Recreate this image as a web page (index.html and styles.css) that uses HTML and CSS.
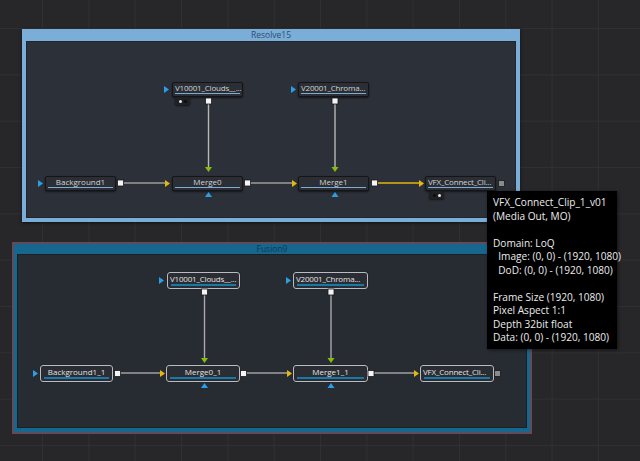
FILE: index.html
```html
<!DOCTYPE html>
<html>
<head>
<meta charset="utf-8">
<link rel="stylesheet" href="styles.css">
</head>
<body>
<div class="canvas">
  <div class="group g1">
    <div class="group-head">Resolve15</div>
    <div class="group-body"></div>
  </div>
  <div class="group g2">
    <div class="group-head">Fusion9</div>
    <div class="group-body"></div>
  </div>

  <div class="node n1 left" style="left:172px;top:82px;width:71px">V10001_Clouds__...</div>
  <div class="node n1 left" style="left:298px;top:82px;width:71px">V20001_Chroma...</div>
  <div class="node n1" style="left:45px;top:176px;width:71px">Background1</div>
  <div class="node n1" style="left:172px;top:176px;width:71px">Merge0</div>
  <div class="node n1" style="left:298px;top:176px;width:71px">Merge1</div>
  <div class="node n1 left" style="left:425px;top:176px;width:71px">VFX_Connect_Cli...</div>

  <div class="node n2 left" style="left:167px;top:272px;width:73px">V10001_Clouds__...</div>
  <div class="node n2 left" style="left:293px;top:272px;width:75px">V20001_Chroma...</div>
  <div class="node n2" style="left:40px;top:365px;width:73px">Background1_1</div>
  <div class="node n2" style="left:166px;top:365px;width:74px">Merge0_1</div>
  <div class="node n2" style="left:293px;top:365px;width:75px">Merge1_1</div>
  <div class="node n2 left" style="left:420px;top:365px;width:74px">VFX_Connect_Cli...</div>

  <div class="chip" style="left:175px;top:97px"><span class="dot on"></span><span class="dot"></span></div>
  <div class="chip" style="left:429px;top:191px"><span class="dot"></span><span class="dot on"></span></div>

  <svg class="wires" width="640" height="461" viewBox="0 0 640 461">
    <g stroke-width="1.4" fill="none">
      <line x1="208.5" y1="104" x2="208.5" y2="167" stroke="#b8b8b8"/>
      <line x1="335" y1="104" x2="335" y2="167" stroke="#b8b8b8"/>
      <line x1="123" y1="183" x2="165" y2="183" stroke="#9c9c9c"/>
      <line x1="250" y1="183" x2="292" y2="183" stroke="#9c9c9c"/>
      <line x1="377" y1="183" x2="419" y2="183" stroke="#e3b511" stroke-width="1.6"/>
      <line x1="204.5" y1="294" x2="204.5" y2="358" stroke="#a8a8a8"/>
      <line x1="331" y1="294" x2="331" y2="358" stroke="#a8a8a8"/>
      <line x1="120" y1="373" x2="160" y2="373" stroke="#a0a0a0"/>
      <line x1="246" y1="373" x2="287" y2="373" stroke="#a0a0a0"/>
      <line x1="374" y1="373" x2="414" y2="373" stroke="#a0a0a0"/>
    </g>
    <g fill="#2a9fe6">
      <polygon points="164,86 169,89.5 164,93"/>
      <polygon points="291,86 296,89.5 291,93"/>
      <polygon points="38,180 43,183.5 38,187"/>
      <polygon points="205,197 212,197 208.5,192"/>
      <polygon points="331.5,197 338.5,197 335,192"/>
      <polygon points="159,277 164,280.5 159,284"/>
      <polygon points="286,277 291,280.5 286,284"/>
      <polygon points="33,370 38,373.5 33,377"/>
      <polygon points="201,388 208,388 204.5,383"/>
      <polygon points="327.5,388 334.5,388 331,383"/>
    </g>
    <g fill="#e6b80c">
      <polygon points="165,180 170,183.5 165,187"/>
      <polygon points="292,180 297,183.5 292,187"/>
      <polygon points="419,180 424,183.5 419,187"/>
      <polygon points="160,370 165,373.5 160,377"/>
      <polygon points="287,370 292,373.5 287,377"/>
      <polygon points="414,370 419,373.5 414,377"/>
    </g>
    <g fill="#86bd0a">
      <polygon points="205,167 212,167 208.5,172"/>
      <polygon points="331.5,167 338.5,167 335,172"/>
      <polygon points="201,358 208,358 204.5,363"/>
      <polygon points="327.5,358 334.5,358 331,363"/>
    </g>
    <g fill="#f4f4f4" stroke="#1a1a1c" stroke-width="0.8">
      <rect x="205.5" y="98" width="6" height="6"/>
      <rect x="332" y="98" width="6" height="6"/>
      <rect x="117.5" y="180" width="6" height="6"/>
      <rect x="244.5" y="180" width="6" height="6"/>
      <rect x="371.5" y="180" width="6" height="6"/>
      <rect x="201.5" y="289" width="6" height="6"/>
      <rect x="328" y="289" width="6" height="6"/>
      <rect x="114.5" y="370.5" width="6" height="6"/>
      <rect x="240.5" y="370.5" width="6" height="6"/>
      <rect x="368" y="370.5" width="6" height="6"/>
    </g>
    <g fill="#8a8a8a" stroke="#1a1a1c" stroke-width="0.8">
      <rect x="498.5" y="180.5" width="6" height="6"/>
      <rect x="494.5" y="370.5" width="6" height="6"/>
    </g>
  </svg>

  <div class="tooltip">VFX_Connect_Clip_1_v01
(Media Out, MO)

Domain: LoQ
  Image: (0, 0) - (1920, 1080)
  DoD: (0, 0) - (1920, 1080)

Frame Size (1920, 1080)
Pixel Aspect 1:1
Depth 32bit float
Data: (0, 0) - (1920, 1080)</div>
</div>
</body>
</html>
```

FILE: styles.css
```css
html, body {
  margin: 0;
  padding: 0;
}
body {
  width: 640px;
  height: 461px;
  overflow: hidden;
  background: #27272a;
  font-family: "Open Sans", "Noto Sans", sans-serif;
}
.canvas {
  position: relative;
  width: 640px;
  height: 461px;
  background-color: #27272a;
  background-image:
    linear-gradient(to right, #303034 1px, transparent 1px),
    linear-gradient(to bottom, #303034 1px, transparent 1px);
  background-size: 46.33px 46.33px;
  background-position: 42px 28px;
}
.group {
  position: absolute;
  display: flex;
  flex-direction: column;
  box-sizing: border-box;
}
.group-head {
  height: 11px;
  line-height: 11px;
  font-size: 8.5px;
  text-align: center;
  flex: none;
}
.group-body {
  flex: 1;
  box-sizing: border-box;
}
.g1 {
  left: 22px;
  top: 29px;
  width: 498px;
  height: 193px;
  background: #7aadd8;
  padding: 0 4px 4px 4px;
  box-shadow: 0 1px 3px rgba(0,0,0,0.6);
}
.g1 .group-head {
  color: #2d4f72;
  height: 12px;
  line-height: 12px;
}
.g1 .group-body {
  background: #2c3038;
  border: 1px solid #22262c;
}
.g2 {
  left: 12px;
  top: 242px;
  width: 520px;
  height: 192px;
  background: #16668e;
  border: 1px solid #a7302c;
  padding: 0 4px 5px 4px;
}
.g2 .group-head {
  color: #0d3a55;
}
.g2 .group-body {
  background: #272b32;
  border: 1px solid #1c1f24;
}
.node {
  position: absolute;
  box-sizing: border-box;
  height: 15px;
  background: #2b2e34;
  border: 1px solid #141518;
  border-radius: 2px;
  box-shadow: 0 1px 2px rgba(0,0,0,0.55);
  color: #d2d2d2;
  font-size: 8px;
  line-height: 9px;
  text-align: center;
  white-space: nowrap;
  overflow: hidden;
  padding: 0 1px;
}
.node.left {
  text-align: left;
  padding-left: 2px;
  letter-spacing: -0.2px;
}
.node::after {
  content: "";
  position: absolute;
  left: 2px;
  right: 2px;
  bottom: 2px;
  height: 1.5px;
  background: #7aaed8;
}
.node.n2 {
  height: 17px;
  border: 1px solid #b9bbbe;
  border-radius: 3px;
  background: #2a2d33;
  color: #e2e2e2;
  line-height: 11px;
  box-shadow: 0 0 1px rgba(0,0,0,0.6);
}
.node.n2::after {
  left: 3px;
  right: 3px;
  bottom: 2px;
  height: 2px;
  background: #1a78a6;
}
.chip {
  position: absolute;
  width: 15px;
  height: 8px;
  background: #1f2023;
  border-radius: 2px;
  box-shadow: 0 1px 2px rgba(0,0,0,0.6);
  display: flex;
  align-items: center;
  justify-content: center;
  gap: 2px;
}
.dot {
  width: 3px;
  height: 3px;
  border-radius: 50%;
  background: #0c0c0d;
}
.dot.on {
  background: #e8e8e8;
}
.wires {
  position: absolute;
  left: 0;
  top: 0;
}
.tooltip {
  position: absolute;
  left: 487px;
  top: 191px;
  width: 130px;
  height: 158px;
  box-sizing: border-box;
  background: #000;
  color: #ececec;
  font-size: 10.1px;
  line-height: 13.5px;
  padding: 5px 0 0 6px;
  white-space: pre;
  box-shadow: 1px 1px 3px rgba(0,0,0,0.5);
}
```
